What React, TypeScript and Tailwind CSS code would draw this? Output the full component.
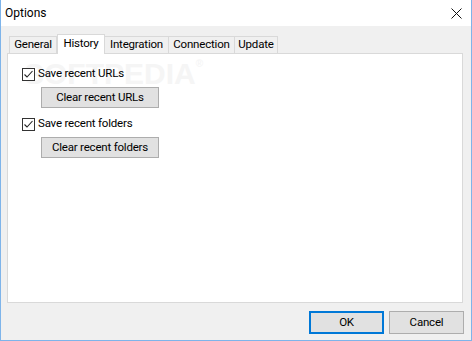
import React from "react";

const font = { fontFamily: "Roboto, 'Liberation Sans', sans-serif" };

function Check() {
  return (
    <span className="w-[13px] h-[13px] border border-[#333333] bg-white flex items-center justify-center shrink-0">
      <svg width="11" height="11" viewBox="0 0 11 11">
        <path d="M1.5 5.5 L4 8 L9.5 2" fill="none" stroke="#222" strokeWidth="1.1" />
      </svg>
    </span>
  );
}

export default function App() {
  const tabs = [
    { label: "General", w: "w-[48px]" },
    { label: "History", w: "w-[48px]", sel: true },
    { label: "Integration", w: "w-[65px]" },
    { label: "Connection", w: "w-[67px]" },
    { label: "Update", w: "w-[44px]" },
  ];
  return (
    <div
      className="relative w-[472px] h-[341px] bg-[#f0f0f0] border-x border-b border-[#7eb4ea] flex flex-col text-[11.5px] tracking-[-0.2px] text-black overflow-hidden"
      style={font}
    >
      <div className="h-[26px] bg-white flex items-center justify-between pl-[4px] pr-[9px] shrink-0">
        <span className="text-[12px] tracking-normal">Options</span>
        <svg width="11" height="11" viewBox="0 0 11 11">
          <path d="M0.5 0.5 L10.5 10.5 M10.5 0.5 L0.5 10.5" stroke="#111" strokeWidth="1" />
        </svg>
      </div>
      <div className="flex flex-col pl-[6px] pt-[8px]">
        <div className="flex items-end h-[20px] pl-[2px] relative z-10">
          {tabs.map((t) =>
            t.sel ? (
              <div
                key={t.label}
                className={`${t.w} h-[20px] bg-white border-x border-t border-[#d9d9d9] flex items-center justify-center pb-[2px]`}
              >
                {t.label}
              </div>
            ) : (
              <div
                key={t.label}
                className={`${t.w} h-[17px] mb-px bg-[#f0f0f0] border-x border-t border-[#d9d9d9] -ml-px first:ml-0 flex items-center justify-center`}
              >
                {t.label}
              </div>
            )
          )}
        </div>
        <div className="relative -mt-px w-[456px] h-[250px] bg-white border border-[#d9d9d9] flex flex-col pl-[14px] pt-[13px]">
          <div
            className="absolute left-[16px] top-[5px] text-[30px] font-bold tracking-normal text-[#f5f5f5] leading-none pointer-events-none select-none"
            style={{ fontFamily: "'Liberation Sans', sans-serif" }}
          >
            SOFTPEDIA<span className="text-[10px] align-top">®</span>
          </div>
          <div className="relative flex items-center gap-[3px] h-[14px]">
            <Check />
            <span>Save recent URLs</span>
          </div>
          <button className="relative mt-[6px] ml-[19px] w-[118px] h-[21px] bg-[#e1e1e1] border border-[#adadad] flex items-center justify-center">
            Clear recent URLs
          </button>
          <div className="relative mt-[9px] flex items-center gap-[3px] h-[14px]">
            <Check />
            <span>Save recent folders</span>
          </div>
          <button className="relative mt-[6px] ml-[19px] w-[118px] h-[21px] bg-[#e1e1e1] border border-[#adadad] flex items-center justify-center">
            Clear recent folders
          </button>
        </div>
      </div>
      <div className="flex justify-end gap-[5px] pr-[7px] mt-[8px]">
        <button className="w-[75px] h-[23px] bg-[#e1e1e1] border-2 border-[#0078d7] flex items-center justify-center">
          OK
        </button>
        <button className="w-[75px] h-[23px] bg-[#e1e1e1] border border-[#adadad] flex items-center justify-center">
          Cancel
        </button>
      </div>
    </div>
  );
}
